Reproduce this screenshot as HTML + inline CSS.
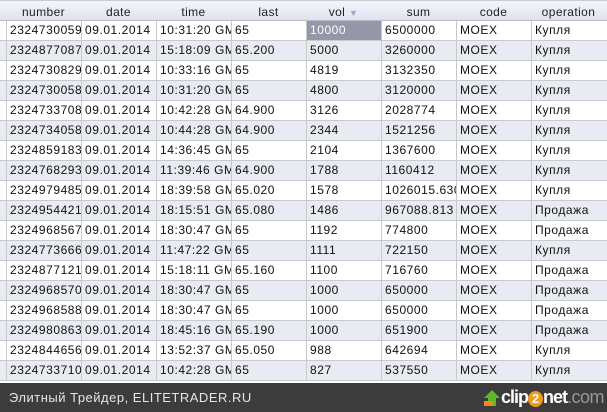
<!DOCTYPE html>
<html><head><meta charset="utf-8"><style>
*{margin:0;padding:0;box-sizing:border-box}
body{width:607px;height:412px;overflow:hidden;background:#fff;font-family:"Liberation Sans","DejaVu Sans",sans-serif;font-size:12px;color:#111;position:relative}
.hdr{position:absolute;left:0;top:0;width:607px;height:21px;background:linear-gradient(#f4f5fa,#dfe3ef);border-top:1px solid #c9ccd6;border-bottom:1px solid #b9bcc6}
.hdr span{position:absolute;top:4px;width:75px;text-align:center;color:#222;letter-spacing:0.4px}
.row{position:absolute;left:0;width:607px;height:20px;border-bottom:1px solid #c9c9cc}
.row.alt{background:#e9ebf2}
.row span{position:absolute;padding-left:3px;width:75px;height:19px;white-space:nowrap;overflow:hidden;border-left:1px solid #c9c9cc;top:0;line-height:19px;letter-spacing:0.55px}
.sel{background:#9597a9;color:#fff}
.bar{position:absolute;left:0;top:383px;width:607px;height:29px;background:#3c3c3c;color:#e6e6e6;font-size:13px}
</style></head><body>
<div class="hdr">
<span style="left:6px">number</span><span style="left:81px">date</span><span style="left:156px">time</span><span style="left:231px">last</span><span style="left:306px">vol <span style="position:static;color:#9aa6c8;font-size:9px">▼</span></span><span style="left:381px">sum</span><span style="left:456px">code</span><span style="left:531px">operation</span>
</div>
<div id="rows"></div>
<div class="row" style="top:381px;height:2px;border:none"></div>
<div class="bar">
<div style="position:absolute;left:9px;top:7px;letter-spacing:0.5px;white-space:nowrap">Элитный Трейдер, ELITETRADER.RU</div>
<svg style="position:absolute;left:482px;top:6px" width="20" height="18" viewBox="0 0 20 18"><polygon points="10,1 18,9 14,9 14,17 6,17 6,9 2,9" fill="#5cb82a"/><rect x="2" y="12" width="9" height="5" fill="#f08a1c"/></svg>
<div style="position:absolute;left:501px;top:4px;font-size:18px;font-weight:bold;color:#fff;letter-spacing:-1px;white-space:nowrap">clip<span style="display:inline-block;background:#f39a1a;border-radius:50%;width:15px;height:16px;line-height:16px;text-align:center;font-size:13px;letter-spacing:0">2</span>net<span style="color:#999;font-weight:normal;letter-spacing:-0.5px">.com</span></div>
</div>
<script>
var d=[["2324730059","10:31:20 GM","65","10000","6500000","Купля"],
["2324877087","15:18:09 GM","65.200","5000","3260000","Купля"],
["2324730829","10:33:16 GM","65","4819","3132350","Купля"],
["2324730058","10:31:20 GM","65","4800","3120000","Купля"],
["2324733708","10:42:28 GM","64.900","3126","2028774","Купля"],
["2324734058","10:44:28 GM","64.900","2344","1521256","Купля"],
["2324859183","14:36:45 GM","65","2104","1367600","Купля"],
["2324768293","11:39:46 GM","64.900","1788","1160412","Купля"],
["2324979485","18:39:58 GM","65.020","1578","1026015.630","Купля"],
["2324954421","18:15:51 GM","65.080","1486","967088.813","Продажа"],
["2324968567","18:30:47 GM","65","1192","774800","Продажа"],
["2324773666","11:47:22 GM","65","1111","722150","Купля"],
["2324877121","15:18:11 GM","65.160","1100","716760","Продажа"],
["2324968570","18:30:47 GM","65","1000","650000","Продажа"],
["2324968588","18:30:47 GM","65","1000","650000","Продажа"],
["2324980863","18:45:16 GM","65.190","1000","651900","Продажа"],
["2324844656","13:52:37 GM","65.050","988","642694","Купля"],
["2324733710","10:42:28 GM","65","827","537550","Купля"]];
var h="";
d.forEach(function(r,i){
var c=[r[0],"09.01.2014",r[1],r[2],r[3],r[4],"MOEX",r[5]];
h+='<div class="row'+(i%2?' alt':'')+'" style="top:'+(21+20*i)+'px">';
c.forEach(function(t,j){h+='<span'+(i==0&&j==4?' class="sel"':'')+' style="left:'+(6+75*j)+'px">'+t+'</span>';});
h+='</div>';});
document.getElementById("rows").innerHTML=h;
</script>
</body></html>
